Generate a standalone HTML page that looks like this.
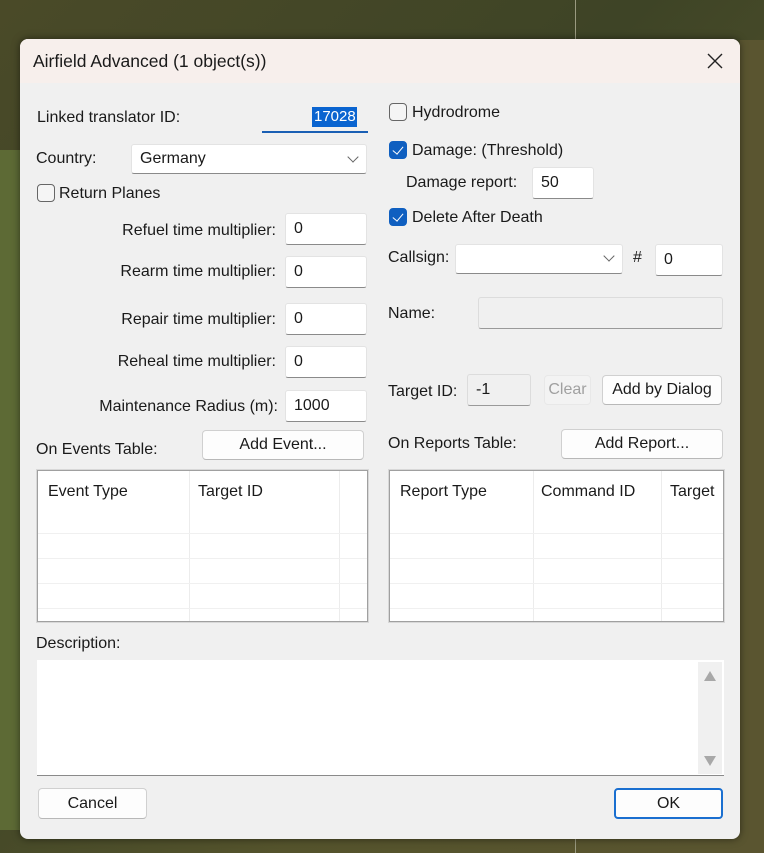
<!DOCTYPE html>
<html><head><meta charset="utf-8"><style>
*{box-sizing:border-box;margin:0;padding:0}
body{width:764px;height:853px;overflow:hidden;position:relative;background:linear-gradient(135deg,#4a4a28 0%,#3e4426 40%,#54532c 70%,#5a5530 100%);font-family:"Liberation Sans",sans-serif;font-size:16px;color:#1a1a1a}
.a{position:absolute}
#dlg{left:20px;top:39px;width:720px;height:800px;background:#f0f0f0;border-radius:8px;overflow:hidden;box-shadow:0 0 8px rgba(0,0,0,.5)}
#tb{left:0;top:0;width:720px;height:44px;background:#f7efec}
.t{position:absolute;white-space:nowrap;line-height:18px}
.r{text-align:right}
.in{position:absolute;background:#fff;border:1px solid #e3e3e3;border-bottom:1px solid #8a8a8a;border-radius:3px;padding:0 8px;display:flex;align-items:center;white-space:nowrap}
.dis{background:#f0f0f0;border-color:#dcdcdc;border-bottom-color:#9a9a9a}
.btn{position:absolute;background:#fdfdfd;border:1px solid #d0d0d0;border-bottom-color:#b8b8b8;border-radius:4px;display:flex;align-items:center;justify-content:center;white-space:nowrap}
.cb{position:absolute;width:18px;height:18px;border:1px solid #666;border-radius:4px;background:#f5f5f5}
.cb.on{background:#0f5fc0;border-color:#0f5fc0}
.cb.on:after{content:"";position:absolute;left:5px;top:2px;width:5px;height:9px;border:solid #fff;border-width:0 1.5px 1.5px 0;transform:rotate(40deg)}
.chev{position:absolute;width:8px;height:8px;border:solid #666;border-width:0 1.3px 1.3px 0;transform:rotate(45deg)}
.tbl{position:absolute;background:#fff;border:1px solid #a0a0a0;outline:1px solid #d8d8d8}
.hl{position:absolute;left:0;right:0;height:1px;background:#f0f0f0}
.vl{position:absolute;top:0;bottom:0;width:1px;background:#ececec}
</style></head><body>
<div class="a" style="left:575px;top:0;width:1px;height:40px;background:#9a9a80"></div>
<div class="a" style="left:575px;top:839px;width:1px;height:14px;background:#9a9a80"></div>
<div class="a" style="left:0;top:150px;width:20px;height:680px;background:#5d6a35"></div>
<div class="a" style="left:740px;top:40px;width:24px;height:800px;background:#5a5530"></div>
<div class="a" id="dlg">
<div class="a" id="tb"></div>
<div class="t" style="left:13px;top:13px;font-size:17.5px">Airfield Advanced (1 object(s))</div>
<svg class="a" style="left:687px;top:14px" width="16" height="16"><path d="M1 1L15 15M15 1L1 15" stroke="#222" stroke-width="1.4"/></svg>

<div class="t" style="left:17px;top:70px">Linked translator ID:</div>
<div class="a" style="left:242px;top:62px;width:106px;height:32px;background:#f0f0f0;border-bottom:2px solid #1a5fb4"></div>
<div class="a" style="left:292px;top:68px;width:45px;height:20px;background:#0a64d0"></div>
<div class="t" style="left:294px;top:69px;color:#fff;font-size:15px">17028</div>

<div class="t" style="left:16px;top:111px">Country:</div>
<div class="in" style="left:111px;top:105px;width:236px;height:30px">Germany</div>
<div class="chev" style="left:329px;top:114px"></div>

<div class="cb" style="left:17px;top:145px"></div>
<div class="t" style="left:39px;top:146px">Return Planes</div>

<div class="t r" style="left:0;width:256px;top:183px">Refuel time multiplier:</div>
<div class="in" style="left:265px;top:174px;width:82px;height:32px">0</div>
<div class="t r" style="left:0;width:256px;top:224px">Rearm time multiplier:</div>
<div class="in" style="left:265px;top:217px;width:82px;height:32px">0</div>
<div class="t r" style="left:0;width:256px;top:272px">Repair time multiplier:</div>
<div class="in" style="left:265px;top:264px;width:82px;height:32px">0</div>
<div class="t r" style="left:0;width:256px;top:314px">Reheal time multiplier:</div>
<div class="in" style="left:265px;top:307px;width:82px;height:32px">0</div>
<div class="t r" style="left:0;width:258px;top:359px">Maintenance Radius (m):</div>
<div class="in" style="left:265px;top:351px;width:82px;height:32px">1000</div>

<div class="t" style="left:16px;top:402px">On Events Table:</div>
<div class="btn" style="left:182px;top:391px;width:162px;height:30px">Add Event...</div>

<div class="tbl" style="left:17px;top:431px;width:331px;height:152px">
<div class="t" style="left:10px;top:12px">Event Type</div>
<div class="t" style="left:160px;top:12px">Target ID</div>
<div class="vl" style="left:151px"></div><div class="vl" style="left:301px"></div>
<div class="hl" style="top:62px"></div><div class="hl" style="top:87px"></div><div class="hl" style="top:112px"></div><div class="hl" style="top:137px"></div>
</div>

<div class="cb" style="left:369px;top:64px"></div>
<div class="t" style="left:392px;top:65px">Hydrodrome</div>
<div class="cb on" style="left:369px;top:102px"></div>
<div class="t" style="left:392px;top:103px">Damage: (Threshold)</div>
<div class="t" style="left:386px;top:135px">Damage report:</div>
<div class="in" style="left:512px;top:128px;width:62px;height:32px">50</div>
<div class="cb on" style="left:369px;top:169px"></div>
<div class="t" style="left:392px;top:170px">Delete After Death</div>

<div class="t" style="left:368px;top:210px">Callsign:</div>
<div class="in" style="left:435px;top:205px;width:168px;height:30px"></div>
<div class="chev" style="left:585px;top:213px"></div>
<div class="t" style="left:613px;top:210px">#</div>
<div class="in" style="left:635px;top:205px;width:68px;height:32px">0</div>

<div class="t" style="left:368px;top:266px">Name:</div>
<div class="in dis" style="left:458px;top:258px;width:245px;height:32px"></div>

<div class="t" style="left:368px;top:344px">Target ID:</div>
<div class="in dis" style="left:447px;top:335px;width:64px;height:32px">-1</div>
<div class="btn" style="left:524px;top:336px;width:47px;height:30px;color:#a0a0a0;background:#f3f3f3;border-color:#e8e8e8">Clear</div>
<div class="btn" style="left:582px;top:336px;width:120px;height:30px">Add by Dialog</div>

<div class="t" style="left:368px;top:396px">On Reports Table:</div>
<div class="btn" style="left:541px;top:390px;width:162px;height:30px">Add Report...</div>

<div class="tbl" style="left:369px;top:431px;width:335px;height:152px;overflow:hidden">
<div class="t" style="left:10px;top:12px">Report Type</div>
<div class="t" style="left:151px;top:12px">Command ID</div>
<div class="t" style="left:280px;top:12px">Target</div>
<div class="vl" style="left:143px"></div><div class="vl" style="left:271px"></div>
<div class="hl" style="top:62px"></div><div class="hl" style="top:87px"></div><div class="hl" style="top:112px"></div><div class="hl" style="top:137px"></div>
</div>

<div class="t" style="left:16px;top:596px">Description:</div>
<div class="a" style="left:17px;top:621px;width:687px;height:116px;background:#fff;border-bottom:1px solid #8a8a8a"></div>
<div class="a" style="left:678px;top:623px;width:24px;height:112px;background:#f0f0f0"></div>
<svg class="a" style="left:683px;top:631px" width="14" height="12"><path d="M7 1L13 11H1Z" fill="#a8a8a8"/></svg>
<svg class="a" style="left:683px;top:716px" width="14" height="12"><path d="M1 1H13L7 11Z" fill="#a8a8a8"/></svg>

<div class="btn" style="left:18px;top:749px;width:109px;height:31px">Cancel</div>
<div class="btn" style="left:594px;top:749px;width:109px;height:31px;border:2px solid #1a6fd0">OK</div>
</div>
</body></html>
